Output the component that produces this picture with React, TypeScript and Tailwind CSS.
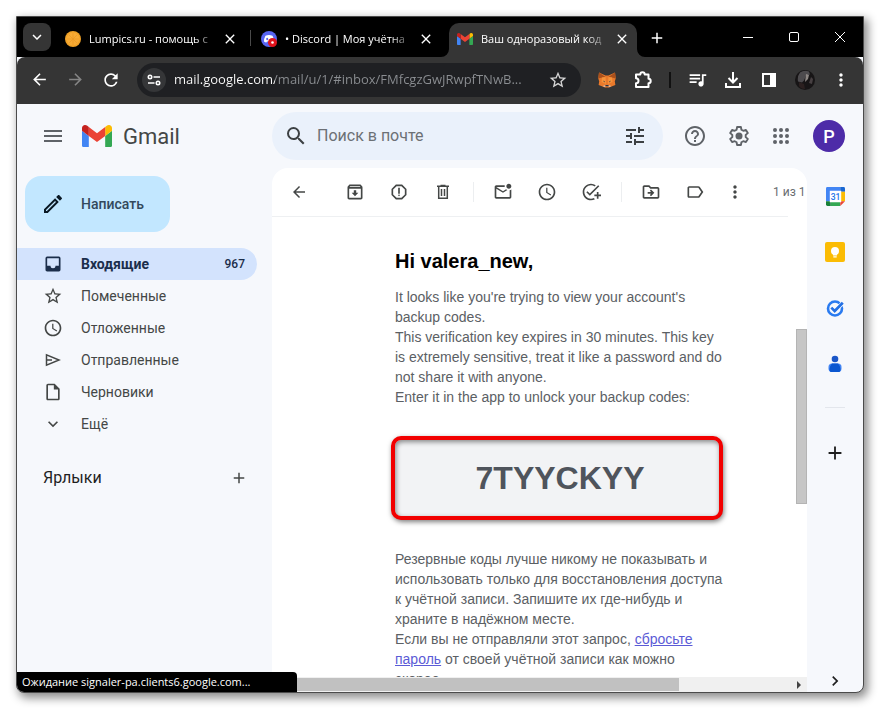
import type { ReactNode } from 'react'
import {
  MdAdd,
  MdArrowBack,
  MdArrowForward,
  MdChevronRight,
  MdClose,
  MdExpandMore,
  MdHelpOutline,
  MdMenu,
  MdMoreVert,
  MdOutlineAddTask,
  MdOutlineArchive,
  MdOutlineDriveFileMove,
  MdOutlineEdit,
  MdOutlineInsertDriveFile,
  MdOutlineLabel,
  MdOutlineMarkEmailUnread,
  MdOutlineReport,
  MdQueueMusic,
  MdRefresh,
  MdSchedule,
  MdSearch,
  MdStarBorder,
  MdTune,
} from 'react-icons/md'

const FOLDERS = [
  { label: 'Входящие', icon: <InboxIcon />, count: '967', active: true },
  { label: 'Помеченные', icon: <MdStarBorder size={20} /> },
  { label: 'Отложенные', icon: <MdSchedule size={20} /> },
  { label: 'Отправленные', icon: <SentIcon /> },
  { label: 'Черновики', icon: <MdOutlineInsertDriveFile size={20} /> },
  { label: 'Ещё', icon: <MdExpandMore size={20} /> },
]

export default function App() {
  return (
    <div className="h-screen min-h-[400px] bg-white p-4 pb-[17px] font-['Roboto',sans-serif]">
      <div className="relative flex h-full flex-col overflow-hidden rounded-b-lg border border-[#4b4b4b] bg-[#f6f8fc] shadow-[3px_4px_10px_1px_rgba(0,0,0,0.45)]">
        <TabStrip />
        <AddressBar />
        <GmailHeader />
        <div className="flex min-h-0 flex-1">
          <Sidebar />
          <Message />
          <SidePanel />
        </div>
        <div className="absolute bottom-0 left-0 h-5 w-[280px] rounded-tr bg-black pl-[5px] font-['Open_Sans','Noto_Sans',sans-serif] text-[11px] leading-5 text-white">
          Ожидание signaler-pa.clients6.google.com...
        </div>
      </div>
    </div>
  )
}

/* ---------- browser ---------- */

function TabStrip() {
  return (
    <div className="flex h-10 shrink-0 items-end bg-black font-['Open_Sans','Noto_Sans',sans-serif] text-white">
      <button type="button" aria-label="Поиск вкладок" className="mb-[6px] ml-[6px] mr-[6px] flex size-7 shrink-0 items-center justify-center rounded-lg bg-[#353535]">
        <MdExpandMore size={18} />
      </button>
      <Tab icon={<OrangeIcon />} title="Lumpics.ru - помощь с" divider />
      <Tab icon={<DiscordIcon />} title="• Discord | Моя учётна" />
      <Tab icon={<GmailLogo className="w-4" />} title="Ваш одноразовый код" active />
      <button type="button" aria-label="Новая вкладка" className="mb-[9px] ml-[10px] p-px">
        <MdAdd size={18} />
      </button>
      <div className="mb-[14px] ml-auto flex items-center">
        <button type="button" aria-label="Свернуть" className="flex w-[46px] justify-center">
          <svg width="12" height="12" viewBox="0 0 12 12" stroke="currentColor"><path d="M1 6.500h10" /></svg>
        </button>
        <button type="button" aria-label="Развернуть" className="flex w-[46px] justify-center">
          <svg width="12" height="12" viewBox="0 0 12 12" fill="none" stroke="currentColor"><rect x="1.500" y="1.500" width="9" height="9" rx="1.500" /></svg>
        </button>
        <button type="button" aria-label="Закрыть" className="flex w-[46px] justify-center">
          <svg width="12" height="12" viewBox="0 0 12 12" stroke="currentColor"><path d="M1 1l10 10M11 1L1 11" /></svg>
        </button>
      </div>
    </div>
  )
}

function Tab({ icon, title, active, divider }: { icon: ReactNode; title: string; active?: boolean; divider?: boolean }) {
  return (
    <div
      className={`relative flex h-[34px] items-center rounded-t-[10px] pb-[2px] pl-2 ${active ? 'w-[188px] bg-[#353535] pr-[7px]' : 'w-[196px] pr-[15px]'}`}
    >
      {active && (
        <>
          <svg className="absolute -left-2 bottom-0" width="8" height="8" fill="#353535"><path d="M8 0v8H0a8 8 0 0 0 8-8z" /></svg>
          <svg className="absolute -right-2 bottom-0" width="8" height="8" fill="#353535"><path d="M0 0v8h8a8 8 0 0 1-8-8z" /></svg>
        </>
      )}
      <span className="flex size-4 shrink-0 items-center">{icon}</span>
      <span className="ml-2 min-w-0 flex-1 whitespace-nowrap text-[11px] [mask-image:linear-gradient(90deg,#000_85%,rgba(0,0,0,0.2))]">
        {title}
      </span>
      <button type="button" aria-label="Закрыть вкладку" className="ml-[9px]">
        <MdClose size={16} />
      </button>
      {divider && <span className="absolute right-[2px] top-[7px] h-4 w-px bg-[#4a4a4a]" />}
    </div>
  )
}

function AddressBar() {
  return (
    <div className="flex h-[47px] shrink-0 items-center rounded-t-lg bg-[#353535] px-1 pb-[2px] text-white">
      <BarButton label="Назад"><MdArrowBack size={19} /></BarButton>
      <BarButton label="Вперёд"><MdArrowForward size={19} className="text-[#858585]" /></BarButton>
      <BarButton label="Обновить"><MdRefresh size={20} /></BarButton>
      <div className="mx-2 flex h-[34px] min-w-0 flex-1 items-center rounded-full bg-[#1f2023] px-[5px]">
        <button type="button" aria-label="Сведения о сайте" className="flex size-6 shrink-0 items-center justify-center rounded-full bg-[#353638]">
          <svg width="14" height="12" viewBox="0 0 14 12" fill="none" stroke="currentColor" strokeWidth="1.600">
            <circle cx="3" cy="3" r="1.700" />
            <path d="M6.500 3H13M1 9h6.500" />
            <circle cx="11" cy="9" r="1.700" />
          </svg>
        </button>
        <input
          type="text"
          aria-label="Адресная строка"
          readOnly
          value="mail.google.com/mail/u/1/#inbox/FMfcgzGwJRwpfTNwB..."
          className="ml-2 min-w-0 flex-1 bg-[linear-gradient(90deg,#fff_101px,#8b8e92_101px)] bg-clip-text font-['Open_Sans','Noto_Sans',sans-serif] text-[13px] text-transparent outline-none"
        />
        <BarButton label="Добавить в закладки"><MdStarBorder size={20} className="text-[#d5d5d5]" /></BarButton>
      </div>
      <BarButton label="MetaMask"><FoxIcon /></BarButton>
      <BarButton label="Расширения">
        <svg width="20" height="20" viewBox="0 0 20 20" fill="none" stroke="currentColor" strokeWidth="2" strokeLinejoin="round">
          <path d="M3 4.500h4.300a2.200 2.200 0 0 1 4.400 0H15.500v4.300a2.200 2.200 0 0 1 0 4.400V17H3v-3.700a2.500 2.500 0 0 0 0-5z" />
        </svg>
      </BarButton>
      <span className="mx-2 h-4 w-[2px] bg-[#111]" />
      <BarButton label="Управление медиа"><MdQueueMusic size={21} /></BarButton>
      <BarButton label="Загрузки">
        <svg width="20" height="20" viewBox="0 0 20 20" fill="none" stroke="currentColor" strokeWidth="2">
          <path d="M10 2v10M5.500 8l4.500 4.500L14.500 8M3 13v4h14v-4" />
        </svg>
      </BarButton>
      <BarButton label="Боковая панель">
        <svg width="16" height="16" viewBox="0 0 16 16">
          <rect x="2" y="2" width="12" height="12" fill="none" stroke="currentColor" strokeWidth="2" />
          <path d="M9 1h6v14H9z" fill="currentColor" />
        </svg>
      </BarButton>
      <BarButton label="Профиль"><ProfilePhoto /></BarButton>
      <BarButton label="Меню"><MdMoreVert size={20} /></BarButton>
    </div>
  )
}

function BarButton({ label, children }: { label: string; children: ReactNode }) {
  return (
    <button type="button" aria-label={label} className="flex h-8 w-9 shrink-0 items-center justify-center">
      {children}
    </button>
  )
}

/* ---------- gmail ---------- */

function GmailHeader() {
  return (
    <header className="flex h-16 shrink-0 items-center text-[#5f6368]">
      <div className="flex w-[255px] shrink-0 items-center pl-6">
        <button type="button" aria-label="Главное меню"><MdMenu size={24} /></button>
        <GmailLogo className="ml-[17px] w-[30px]" />
        <span className="ml-[11px] text-[22px] text-[#444746]">Gmail</span>
      </div>
      <form className="flex h-12 min-w-0 flex-1 items-center rounded-full bg-[#eaf1fb] pl-3 pr-4 text-[#3c4043]" onSubmit={(e) => e.preventDefault()}>
        <button type="submit" aria-label="Поиск"><MdSearch size={24} /></button>
        <input
          type="search"
          aria-label="Поиск в почте"
          placeholder="Поиск в почте"
          className="ml-[9px] min-w-0 flex-1 bg-transparent text-[16px] outline-none placeholder:text-[#6c7075]"
        />
        <button type="button" aria-label="Параметры поиска"><MdTune size={24} /></button>
      </form>
      <div className="flex shrink-0 items-center pl-5 pr-[18px]">
        <button type="button" aria-label="Поддержка"><MdHelpOutline size={24} /></button>
        <button type="button" aria-label="Настройки" className="ml-5"><GearIcon /></button>
        <button type="button" aria-label="Приложения Google" className="ml-5">
          <svg width="20" height="20" viewBox="0 0 20 20" fill="currentColor">
            {[4, 10, 16].map((y) => [4, 10, 16].map((x) => <circle key={`${x}-${y}`} cx={x} cy={y} r="2" />))}
          </svg>
        </button>
        <button type="button" aria-label="Аккаунт Google" className="ml-[22px] size-8 rounded-full bg-[#4d2ba8] text-[18px] font-medium text-white">
          P
        </button>
      </div>
    </header>
  )
}

function Sidebar() {
  return (
    <aside className="w-[255px] shrink-0 pt-2 text-[14px] text-[#444746]">
      <button type="button" className="ml-2 flex h-14 w-[145px] items-center gap-4 rounded-2xl bg-[#c2e7ff] pl-4 text-[#33495c]">
        <MdOutlineEdit size={24} className="text-[#0b1a26]" />
        <span className="font-medium">Написать</span>
      </button>
      <nav className="mt-4 pr-[15px]">
        {FOLDERS.map((f) => (
          <a
            key={f.label}
            href="#"
            className={`flex h-8 items-center rounded-r-full pl-[26px] pr-3 ${f.active ? 'bg-[#d3e3fd] font-bold text-[#1b2e4b]' : ''}`}
          >
            <span className="flex size-5 shrink-0 items-center justify-center">{f.icon}</span>
            <span className="ml-[18px] flex-1">{f.label}</span>
            {f.count && <span className="text-[12px] font-medium">{f.count}</span>}
          </a>
        ))}
      </nav>
      <div className="mt-6 flex h-7 items-center justify-between pl-[26px] pr-6">
        <h2 className="text-[16px] text-[#1f1f1f]">Ярлыки</h2>
        <button type="button" aria-label="Создать ярлык"><MdAdd size={18} /></button>
      </div>
    </aside>
  )
}

function Message() {
  return (
    <main className="flex min-w-0 flex-1 flex-col overflow-hidden rounded-t-2xl bg-white">
      <div className="mr-[19px] flex h-[49px] shrink-0 items-center gap-6 border-b border-[#eef0f2] pl-[17px] text-[#444746]">
        <ToolButton label="Назад"><MdArrowBack size={18} /></ToolButton>
        <span className="-ml-3" />
        <ToolButton label="Архивировать"><MdOutlineArchive size={20} /></ToolButton>
        <ToolButton label="В спам"><MdOutlineReport size={20} /></ToolButton>
        <ToolButton label="Удалить"><TrashIcon /></ToolButton>
        <span className="-ml-1 -mr-[5px] h-5 w-px shrink-0 bg-[#eceef0]" />
        <ToolButton label="Отметить как непрочитанное"><MdOutlineMarkEmailUnread size={20} /></ToolButton>
        <ToolButton label="Отложить"><MdSchedule size={20} /></ToolButton>
        <ToolButton label="Добавить в задачи"><MdOutlineAddTask size={20} /></ToolButton>
        <span className="-ml-1 -mr-[5px] h-5 w-px shrink-0 bg-[#eceef0]" />
        <ToolButton label="Переместить"><MdOutlineDriveFileMove size={20} /></ToolButton>
        <ToolButton label="Ярлыки"><MdOutlineLabel size={20} /></ToolButton>
        <span className="-ml-1 flex shrink-0 items-center gap-7">
          <ToolButton label="Ещё"><MdMoreVert size={20} /></ToolButton>
          <span className="whitespace-nowrap text-[12px] text-[#6a6d70]">1 из 1</span>
        </span>
      </div>
      <div className="flex min-h-0 flex-1">
        <article className="min-w-0 flex-1 overflow-hidden pl-[123px] pt-8 font-['Liberation_Sans',Arial,sans-serif] text-[14px] leading-5 text-[#5b6064]">
          <h1 className="mb-[14px] text-[20px] font-bold leading-6 text-black">Hi valera_new,</h1>
          <p>
            It looks like you're trying to view your account's
            <br />
            backup codes.
            <br />
            This verification key expires in 30 minutes. This key
            <br />
            is extremely sensitive, treat it like a password and do
            <br />
            not share it with anyone.
            <br />
            Enter it in the app to unlock your backup codes:
          </p>
          <div className="-ml-1 mt-[29px] flex h-[84px] w-[332px] items-center justify-center rounded-[10px] border-4 border-[#f20000] bg-[#f2f3f5] pl-[6px] text-[32px] font-bold text-[#4f545c] shadow-[1px_2px_5px_rgba(0,0,0,0.5),inset_1px_2px_5px_rgba(0,0,0,0.45)]">
            7TYYCKYY
          </div>
          <p className="mt-[29px]">
            Резервные коды лучше никому не показывать и
            <br />
            использовать только для восстановления доступа
            <br />
            к учётной записи. Запишите их где-нибудь и
            <br />
            храните в надёжном месте.
            <br />
            Если вы не отправляли этот запрос, <a href="#" className="text-[#5b5bd6] underline">сбросьте</a>
            <br />
            <a href="#" className="text-[#5b5bd6] underline">пароль</a> от своей учётной записи как можно
            <br />
            скорее.
          </p>
        </article>
        <div className="flex w-[11px] shrink-0 flex-col">
          <span className="grow-[112]" />
          <span className="grow-[174] border border-[#b4b4b4] bg-[#c6c6c6]" />
          <span className="grow-[174]" />
        </div>
      </div>
      <div className="flex h-[15px] shrink-0 items-center bg-[#f0f0f0]">
        <span className="h-[13px] w-[76%] bg-[#c1c1c1]" />
        <svg className="ml-auto mr-[5px]" width="6" height="8" fill="#444"><path d="M1 0l4 4-4 4z" /></svg>
      </div>
    </main>
  )
}

function ToolButton({ label, children }: { label: string; children: ReactNode }) {
  return (
    <button type="button" aria-label={label} className="flex size-5 shrink-0 items-center justify-center">
      {children}
    </button>
  )
}

function SidePanel() {
  return (
    <aside className="flex w-14 shrink-0 flex-col items-center pb-px pt-[18px]">
      <button type="button" aria-label="Календарь" className="flex h-5 items-center"><CalendarIcon /></button>
      <button type="button" aria-label="Keep" className="mt-9 flex h-5 items-center"><KeepIcon /></button>
      <button type="button" aria-label="Задачи" className="mt-9 flex h-5 items-center"><TasksIcon /></button>
      <button type="button" aria-label="Контакты" className="mt-9 flex h-5 items-center"><ContactsIcon /></button>
      <span className="mt-[33px] h-px w-5 bg-[#e3e6ec]" />
      <button type="button" aria-label="Установить дополнения" className="mt-[34px] text-[#1f1f1f]"><MdAdd size={22} /></button>
      <button type="button" aria-label="Скрыть боковую панель" className="mt-auto text-[#1f1f1f]"><MdChevronRight size={20} /></button>
    </aside>
  )
}

/* ---------- icons ---------- */

function GmailLogo({ className }: { className: string }) {
  return (
    <svg className={className} viewBox="52 42 88 66">
      <path fill="#4285f4" d="M58 108h14V74L52 59v43c0 3.320 2.690 6 6 6" />
      <path fill="#34a853" d="M120 108h14c3.320 0 6-2.690 6-6V59l-20 15" />
      <path fill="#fbbc04" d="M120 48v26l20-15v-8c0-7.420-8.470-11.650-14.400-7.200" />
      <path fill="#ea4335" d="M72 74V48l24 18 24-18v26L96 92" />
      <path fill="#c5221f" d="M52 51v8l20 15V48l-5.600-4.200c-5.940-4.450-14.400-.22-14.400 7.200" />
    </svg>
  )
}

function OrangeIcon() {
  return (
    <svg width="16" height="16" viewBox="0 0 16 16">
      <circle cx="8" cy="8" r="8" fill="#f0a126" />
      <circle cx="8" cy="8" r="6.500" fill="#f7ab35" />
      <path d="M8 2v12M2 8h12M4 4l8 8M12 4l-8 8" stroke="#eb9a24" strokeWidth=".7" />
    </svg>
  )
}

function DiscordIcon() {
  return (
    <svg width="16" height="16" viewBox="0 0 16 16">
      <circle cx="8" cy="8" r="8" fill="#5865f2" />
      <path d="M4.500 4.800Q8 3.300 11.500 4.800q1.700 3 1.500 5.700-1 .9-2.400 1l-.6-1H6l-.6 1q-1.400-.1-2.400-1Q2.800 7.800 4.500 4.800z" fill="#fff" />
      <ellipse cx="6.200" cy="8" rx="1" ry="1.200" fill="#5865f2" />
      <circle cx="11.500" cy="11.500" r="4.500" fill="#e0131c" />
      <circle cx="11.500" cy="11.500" r="1.300" fill="#fff" />
    </svg>
  )
}

function FoxIcon() {
  return (
    <svg width="18" height="16" viewBox="0 0 18 16">
      <path fill="#e8792b" d="M1 .5l6.500 3h3l6.500-3 .7 6-.9 3 .6 3.500-3.900 1.600-2.500 1H7l-2.500-1L.6 13l.6-3.500-.9-3z" />
      <path fill="#a9501c" d="M1 .5l6.500 4.500L4 5.500.3 6.500zM17 .5L10.500 5l3.500.5 3.700 1z" />
      <path fill="#f5933b" d="M4 5.500L7.500 5l.5 7-4.500-2zM14 5.500l-3.500-.5-.5 7 4.500-2z" />
      <path fill="#233447" d="M4.800 8.500l2 1-.1 1zM13.200 8.500l-2 1 .1 1zM7.300 13h3.400v1.300H7.300z" />
      <path fill="#d7c1b3" d="M4.500 14.100l2.800-.8v2zM13.500 14.100l-2.800-.8v2z" />
    </svg>
  )
}

function ProfilePhoto() {
  return (
    <svg width="20" height="20" viewBox="0 0 20 20">
      <circle cx="10" cy="10" r="10" fill="#171516" />
      <path d="M5 2.500Q9-.5 14 1.500l1 3-4 1-2 5-2 2-4-1q-1-5 2-9z" fill="#4d4b4e" />
      <path d="M11 4l3 1-1 4-3 3z" fill="#8d8784" />
      <path d="M16 7l2 2-1 5-3-1z" fill="#474042" />
      <path d="M4 12l5 2 1 5q-4 0-6-3z" fill="#2b2020" />
    </svg>
  )
}

function GearIcon() {
  return (
    <svg width="24" height="24" viewBox="0 0 24 24" fill="none" stroke="currentColor" strokeWidth="1.900" strokeLinejoin="round">
      <path d="M10.100 3h3.800l.5 2.700 1.900 1.100 2.600-.9 1.900 3.200-2.100 1.800v2.200l2.100 1.800-1.900 3.200-2.600-.9-1.900 1.100-.5 2.700h-3.800l-.5-2.700-1.900-1.100-2.600.9-1.900-3.200 2.100-1.800v-2.200L3.200 9.100l1.900-3.200 2.600.9 1.900-1.100z" />
      <circle cx="12" cy="12" r="3.500" fill="currentColor" stroke="none" />
    </svg>
  )
}

function InboxIcon() {
  return (
    <svg width="20" height="20" viewBox="0 0 24 24" fill="currentColor">
      <path d="M19 3H5a2 2 0 0 0-2 2v14c0 1.100.9 2 2 2h14a2 2 0 0 0 2-2V5a2 2 0 0 0-2-2zm0 11h-4a3 3 0 0 1-6 0H5V5h14z" />
    </svg>
  )
}

function SentIcon() {
  return (
    <svg width="20" height="20" viewBox="0 0 20 20" fill="none" stroke="currentColor" strokeWidth="1.500">
      <path d="M3.500 4.800v10.400L16 10zM3.500 10H9" />
    </svg>
  )
}

function TrashIcon() {
  return (
    <svg width="20" height="20" viewBox="0 0 20 20" fill="none" stroke="currentColor" strokeWidth="1.500">
      <path d="M4 4.200h12M7.500 3.500h5M5.700 4.500v11.800h8.600V4.500M8.500 7v7M11.500 7v7" />
    </svg>
  )
}

function CalendarIcon() {
  return (
    <svg width="19" height="19" viewBox="0 0 20 20">
      <path fill="#4285f4" d="M1.500 0H15v5H5v10H0V1.500A1.500 1.500 0 0 1 1.500 0z" />
      <path fill="#1967d2" d="M15 0h3.500A1.500 1.500 0 0 1 20 1.500V5h-5z" />
      <path fill="#fbbc04" d="M15 5h5v10h-5z" />
      <path fill="#34a853" d="M5 15h10v5H5z" />
      <path fill="#188038" d="M0 15h5v5H1.500A1.500 1.500 0 0 1 0 18.500z" />
      <path fill="#ea4335" d="M15 15h5l-5 5z" />
      <path fill="#fff" d="M4 4h12v12H4z" />
      <text x="10" y="13.500" textAnchor="middle" fontSize="9" fontWeight="500" fill="#1a73e8" fontFamily="Roboto">31</text>
    </svg>
  )
}

function KeepIcon() {
  return (
    <svg width="20" height="20" viewBox="0 0 20 20">
      <rect width="20" height="20" rx="2" fill="#fbbc04" />
      <circle cx="10" cy="9" r="4" fill="#fff" />
      <path d="M8 11h4v2.500H8zM8.300 14.300h3.400v1.200H8.300z" fill="#fff" />
    </svg>
  )
}

function TasksIcon() {
  return (
    <svg width="20" height="20" viewBox="0 0 20 20" fill="none">
      <circle cx="10" cy="10.500" r="7" stroke="#2a7bf0" strokeWidth="2.600" />
      <path d="M6.500 9.800l3.300 3.200L17.800 5" stroke="#fff" strokeWidth="4" />
      <path d="M6.300 9.600l3.400 3.400L17.800 4.700" stroke="#2370e4" strokeWidth="2.700" />
    </svg>
  )
}

function ContactsIcon() {
  return (
    <svg width="20" height="20" viewBox="0 0 20 20">
      <circle cx="10" cy="5" r="3.300" fill="#1a56c8" />
      <rect x="3.500" y="9.500" width="13" height="8.500" rx="3.500" fill="#4285f4" />
      <path d="M7 9.500h6q2.500 2.500 2.500 5.500 0 2-1 3h-9q-1-1-1-3Q4.500 12 7 9.500z" fill="#0b57d0" />
    </svg>
  )
}
